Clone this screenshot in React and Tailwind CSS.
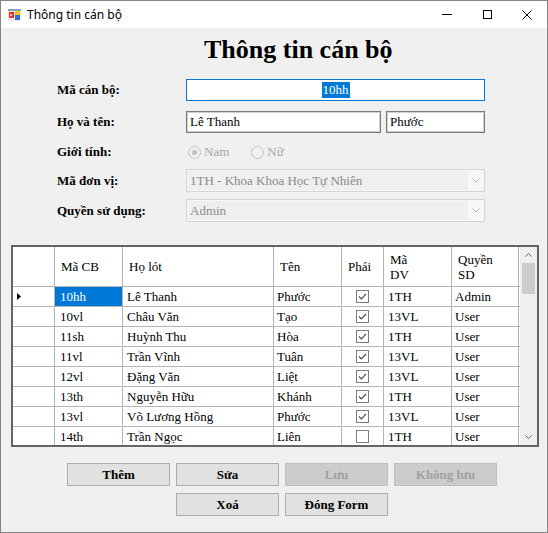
import React from "react";

const rows = [
  ["10hh", "Lê Thanh", "Phước", true, "1TH", "Admin"],
  ["10vl", "Châu Văn", "Tạo", true, "13VL", "User"],
  ["11sh", "Huỳnh Thu", "Hòa", true, "1TH", "User"],
  ["11vl", "Trần Vĩnh", "Tuân", true, "13VL", "User"],
  ["12vl", "Đặng Văn", "Liệt", true, "13VL", "User"],
  ["13th", "Nguyễn Hữu", "Khánh", true, "1TH", "User"],
  ["13vl", "Võ Lương Hồng", "Phước", true, "13VL", "User"],
  ["14th", "Trần Ngọc", "Liên", false, "1TH", "User"],
];

function Check({ on }) {
  return (
    <svg width="13" height="13" viewBox="0 0 13 13">
      <rect x="0.5" y="0.5" width="12" height="12" fill="#fff" stroke="#7a7a7a" />
      {on && <path d="M3 6.5 L5.3 8.8 L10 4" fill="none" stroke="#505050" strokeWidth="1.2" />}
    </svg>
  );
}

function Btn({ children, disabled }) {
  return (
    <div
      className={
        "w-[103px] h-[23px] flex items-center justify-center border text-[13px] font-bold " +
        (disabled
          ? "bg-[#cccccc] border-[#bfbfbf] text-[#a0a0a0]"
          : "bg-[#e1e1e1] border-[#adadad] text-black")
      }
    >
      {children}
    </div>
  );
}

function Combo({ text }) {
  return (
    <div className="w-[299px] h-[23px] border border-[#d4d4d4] bg-[#f7f7f7] flex p-[1px]">
      <div className="w-[280px] h-full bg-[#efefef] flex items-center pl-[2px] text-[13px] text-[#8a8a8a]">
        {text}
      </div>
      <div className="flex-1 flex items-center justify-center">
        <svg width="8" height="5" viewBox="0 0 8 5">
          <path d="M0.5 0.5 L4 4 L7.5 0.5" fill="none" stroke="#b5b5b5" strokeWidth="1" />
        </svg>
      </div>
    </div>
  );
}

function Radio({ on, label }) {
  return (
    <div className="flex items-center gap-[3px]">
      <svg width="13" height="13" viewBox="0 0 13 13">
        <circle cx="6.5" cy="6.5" r="6" fill="#f0f0f0" stroke="#c2c2c2" />
        {on && <circle cx="6.5" cy="6.5" r="2.5" fill="#c2c2c2" />}
      </svg>
      <span className="text-[13px] text-[#a8a8a8]">{label}</span>
    </div>
  );
}

const widths = ["w-[68px]", "w-[151px]", "w-[68px]", "w-[42px]", "w-[68px]", "w-[67px]"];

export default function App() {
  return (
    <div className="w-[548px] h-[533px] border border-[#858585] flex flex-col bg-white overflow-hidden font-['Liberation_Serif',serif]">
      {/* title bar */}
      <div className="h-[27px] flex items-center bg-white font-['Noto_Sans',sans-serif] text-[12px] text-black">
        <svg className="ml-[7px]" width="13" height="12" viewBox="0 0 13 12">
          <rect x="0" y="0" width="13" height="12" fill="#e8e8e8" />
          <rect x="0" y="0" width="13" height="2" fill="#8aa0c0" />
          <rect x="1" y="3" width="5" height="6" fill="#e0332f" />
          <rect x="2" y="5" width="2" height="2" fill="#f7c0bd" />
          <rect x="7" y="2" width="5" height="4" fill="#f5c21a" />
          <rect x="7" y="6" width="5" height="5" fill="#2f6fd6" />
        </svg>
        <span className="ml-[6px]">Thông tin cán bộ</span>
        <div className="ml-auto flex h-full">
          <div className="w-[40px] h-full flex items-center justify-center">
            <div className="w-[10px] h-[1px] bg-black" />
          </div>
          <div className="w-[40px] h-full flex items-center justify-center">
            <div className="w-[9px] h-[9px] border border-black" />
          </div>
          <div className="w-[40px] h-full flex items-center justify-center">
            <svg width="10" height="10" viewBox="0 0 10 10">
              <path d="M0.5 0.5 L9.5 9.5 M9.5 0.5 L0.5 9.5" stroke="#000" strokeWidth="1" />
            </svg>
          </div>
        </div>
      </div>

      {/* client */}
      <div className="flex-1 bg-[#f0f0f0] flex flex-col">
        <div className="mt-[7px] pl-[203px] text-[26px] leading-[29px] font-bold text-black">
          Thông tin cán bộ
        </div>

        <div className="mt-[15px] flex items-center h-[22px]">
          <div className="w-[185px] pl-[56px] text-[13px] font-bold">Mã cán bộ:</div>
          <div className="w-[299px] h-[22px] border border-[#0078d7] bg-white flex items-center justify-center text-[13px]">
            <span className="bg-[#0078d7] text-white px-[1px] leading-[16px]">10hh</span>
          </div>
        </div>

        <div className="mt-[10px] flex items-center h-[22px]">
          <div className="w-[185px] pl-[56px] text-[13px] font-bold">Họ và tên:</div>
          <div className="w-[195px] h-[22px] border border-[#7a7a7a] shadow-[inset_0_0_0_1px_#d0d0d0] bg-white flex items-center pl-[3px] text-[13px]">
            Lê Thanh
          </div>
          <div className="ml-[5px] w-[99px] h-[22px] border border-[#7a7a7a] shadow-[inset_0_0_0_1px_#d0d0d0] bg-white flex items-center pl-[3px] text-[13px]">
            Phước
          </div>
        </div>

        <div className="mt-[11px] flex items-center h-[16px]">
          <div className="w-[187px] pl-[56px] text-[13px] font-bold">Giới tính:</div>
          <Radio on label="Nam" />
          <div className="ml-[22px]">
            <Radio label="Nữ" />
          </div>
        </div>

        <div className="mt-[9px] flex items-center h-[23px]">
          <div className="w-[185px] pl-[56px] text-[13px] font-bold">Mã đơn vị:</div>
          <Combo text="1TH - Khoa Khoa Học Tự Nhiên" />
        </div>

        <div className="mt-[7px] flex items-center h-[23px]">
          <div className="w-[185px] pl-[56px] text-[13px] font-bold">Quyền sử dụng:</div>
          <Combo text="Admin" />
        </div>

        {/* grid */}
        <div className="mt-[23px] ml-[10px] w-[528px] h-[202px] border-2 border-[#646464] bg-white flex text-[13px] text-black overflow-hidden">
          <div className="w-[507px] flex flex-col">
            <div className="h-[40px] shrink-0 flex border-b border-[#b4b4b4] leading-[15px]">
              <div className="w-[42px] border-r border-[#b4b4b4]" />
              {["Mã CB", "Họ lót", "Tên", "Phái", ["Mã", "DV"], ["Quyền", "SD"]].map((h, i) => (
                <div
                  key={i}
                  className={widths[i] + " border-r border-[#b4b4b4] flex flex-col justify-center pl-[6px]"}
                >
                  {Array.isArray(h) ? (
                    <>
                      <span>{h[0]}</span>
                      <span>{h[1]}</span>
                    </>
                  ) : (
                    <span>{h}</span>
                  )}
                </div>
              ))}
            </div>
            {rows.map((r, ri) => (
              <div key={ri} className="h-[20px] shrink-0 flex border-b border-[#b4b4b4] leading-[19px]">
                <div className="w-[42px] border-r border-[#b4b4b4] flex items-center pl-[4px]">
                  {ri === 0 && (
                    <svg width="4" height="7" viewBox="0 0 4 7">
                      <path d="M0 0 L4 3.5 L0 7 Z" fill="#000" />
                    </svg>
                  )}
                </div>
                <div
                  className={
                    widths[0] +
                    " border-r border-[#b4b4b4] pl-[5px] " +
                    (ri === 0 ? "bg-[#0078d7] text-white" : "")
                  }
                >
                  {r[0]}
                </div>
                <div className={widths[1] + " border-r border-[#b4b4b4] pl-[4px]"}>{r[1]}</div>
                <div className={widths[2] + " border-r border-[#b4b4b4] pl-[3px]"}>{r[2]}</div>
                <div className={widths[3] + " border-r border-[#b4b4b4] flex items-center justify-center"}>
                  <Check on={r[3]} />
                </div>
                <div className={widths[4] + " border-r border-[#b4b4b4] pl-[4px]"}>{r[4]}</div>
                <div className={widths[5] + " border-r border-[#b4b4b4] pl-[3px]"}>{r[5]}</div>
              </div>
            ))}
          </div>
          <div className="w-[17px] bg-[#f0f0f0] flex flex-col items-center">
            <div className="h-[16px] w-full flex items-center justify-center">
              <svg width="7" height="4" viewBox="0 0 7 4">
                <path d="M0.5 3.5 L3.5 0.5 L6.5 3.5" fill="none" stroke="#606060" strokeWidth="1" />
              </svg>
            </div>
            <div className="w-[13px] h-[31px] bg-[#cdcdcd]" />
            <div className="flex-1" />
            <div className="h-[16px] w-full flex items-center justify-center">
              <svg width="7" height="4" viewBox="0 0 7 4">
                <path d="M0.5 0.5 L3.5 3.5 L6.5 0.5" fill="none" stroke="#606060" strokeWidth="1" />
              </svg>
            </div>
          </div>
        </div>

        {/* buttons */}
        <div className="mt-[16px] ml-[66px] flex gap-[6px]">
          <Btn>Thêm</Btn>
          <Btn>Sửa</Btn>
          <Btn disabled>Lưu</Btn>
          <Btn disabled>Không lưu</Btn>
        </div>
        <div className="mt-[7px] ml-[175px] flex gap-[6px]">
          <Btn>Xoá</Btn>
          <Btn>Đóng Form</Btn>
        </div>
      </div>
    </div>
  );
}
